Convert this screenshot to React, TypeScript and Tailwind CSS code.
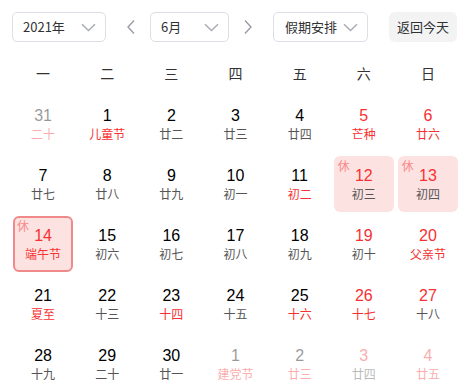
import React from 'react'

type Day = {
    n: number
    l: string
    nr?: boolean
    lr?: boolean
    f?: boolean
    rest?: boolean
    sel?: boolean
}

const weeks: Day[][] = [
    [
        { n: 31, l: '二十', lr: true, f: true },
        { n: 1, l: '儿童节', lr: true },
        { n: 2, l: '廿二' },
        { n: 3, l: '廿三' },
        { n: 4, l: '廿四' },
        { n: 5, l: '芒种', nr: true, lr: true },
        { n: 6, l: '廿六', nr: true, lr: true },
    ],
    [
        { n: 7, l: '廿七' },
        { n: 8, l: '廿八' },
        { n: 9, l: '廿九' },
        { n: 10, l: '初一' },
        { n: 11, l: '初二', lr: true },
        { n: 12, l: '初三', nr: true, rest: true },
        { n: 13, l: '初四', nr: true, rest: true },
    ],
    [
        { n: 14, l: '端午节', nr: true, lr: true, rest: true, sel: true },
        { n: 15, l: '初六' },
        { n: 16, l: '初七' },
        { n: 17, l: '初八' },
        { n: 18, l: '初九' },
        { n: 19, l: '初十', nr: true },
        { n: 20, l: '父亲节', nr: true, lr: true },
    ],
    [
        { n: 21, l: '夏至', lr: true },
        { n: 22, l: '十三' },
        { n: 23, l: '十四', lr: true },
        { n: 24, l: '十五' },
        { n: 25, l: '十六', lr: true },
        { n: 26, l: '十七', nr: true, lr: true },
        { n: 27, l: '十八', nr: true },
    ],
    [
        { n: 28, l: '十九' },
        { n: 29, l: '二十' },
        { n: 30, l: '廿一' },
        { n: 1, l: '建党节', lr: true, f: true },
        { n: 2, l: '廿三', lr: true, f: true },
        { n: 3, l: '廿四', nr: true, f: true },
        { n: 4, l: '廿五', nr: true, lr: true, f: true },
    ],
]

const Chevron = ({ dir }: { dir: 'down' | 'left' | 'right' }) => {
    if (dir === 'down') {
        return (
            <svg width="15" height="9" viewBox="0 0 15 9" fill="none">
                <path d="M1 1.2 L7.5 7.5 L14 1.2" stroke="#a8abb2" strokeWidth="1.4" />
            </svg>
        )
    }
    return (
        <svg width="10" height="16" viewBox="0 0 10 16" fill="none">
            <path
                d={dir === 'left' ? 'M8 1.5 L2 8 L8 14.5' : 'M2 1.5 L8 8 L2 14.5'}
                stroke="#9a9ca6"
                strokeWidth="1.4"
            />
        </svg>
    )
}

const Select = ({ label, w, pl, pr }: { label: string; w: string; pl: string; pr: string }) => (
    <div className={`${w} ${pl} ${pr} h-[30px] flex items-center justify-between border border-[#dcdfe6] rounded-[5px] bg-white text-[13px] text-[#303133]`}>
        <span>{label}</span>
        <Chevron dir="down" />
    </div>
)

const Cell = ({ d }: { d: Day }) => {
    const numColor = d.nr ? 'text-[#f73131]' : 'text-black'
    const lunColor = d.lr ? 'text-[#f73131]' : 'text-[#555]'
    const box = d.sel
        ? 'bg-[#fde2e2] border-2 border-[#f08a8a]'
        : d.rest
          ? 'bg-[#fde2e2]'
          : ''
    return (
        <div className="h-[60px] p-[2px]">
            <div className={`relative h-full rounded-[6px] flex flex-col items-center justify-center ${box} ${d.f ? 'opacity-40' : ''}`}>
                {d.rest && (
                    <span className={`absolute ${d.sel ? 'left-[2px] top-0' : 'left-[4px] top-[2px]'} text-[12px] leading-[16px] text-[#f78989]`}>休</span>
                )}
                <span className={`text-[16px] leading-[19px] ${numColor}`} style={{ fontFamily: '"Liberation Sans", Arial, sans-serif' }}>
                    {d.n}
                </span>
                <span className={`text-[12px] leading-[17px] ${lunColor}`}>{d.l}</span>
            </div>
        </div>
    )
}

const App = () => {
    return (
        <div className="w-[471px] h-[387px] overflow-hidden bg-white" style={{ fontFamily: '"Noto Sans CJK SC", "Liberation Sans", sans-serif' }}>
            <div className="flex items-center pl-[12px] pt-[12px]">
                <Select label="2021年" w="w-[94px]" pl="pl-[10px]" pr="pr-[9px]" />
                <div className="ml-[20px] mr-[14px] flex"><Chevron dir="left" /></div>
                <Select label="6月" w="w-[79px]" pl="pl-[10px]" pr="pr-[9px]" />
                <div className="ml-[14px] mr-[20px] flex"><Chevron dir="right" /></div>
                <Select label="假期安排" w="w-[95px]" pl="pl-[11px]" pr="pr-[9px]" />
                <div className="ml-[21px] w-[68px] h-[30px] rounded-[6px] bg-[#f3f3f4] flex items-center justify-center text-[13px] text-[#303133]">
                    返回今天
                </div>
            </div>
            <div className="px-[11px] mt-[10px]">
                <div className="grid grid-cols-7 h-[42px] items-center text-center text-[14px] text-[#333]">
                    {['一', '二', '三', '四', '五', '六', '日'].map(w => (
                        <div key={w}>{w}</div>
                    ))}
                </div>
                <div className="grid grid-cols-7">
                    {weeks.flat().map((d, i) => (
                        <Cell key={i} d={d} />
                    ))}
                </div>
            </div>
        </div>
    )
}

export default App
